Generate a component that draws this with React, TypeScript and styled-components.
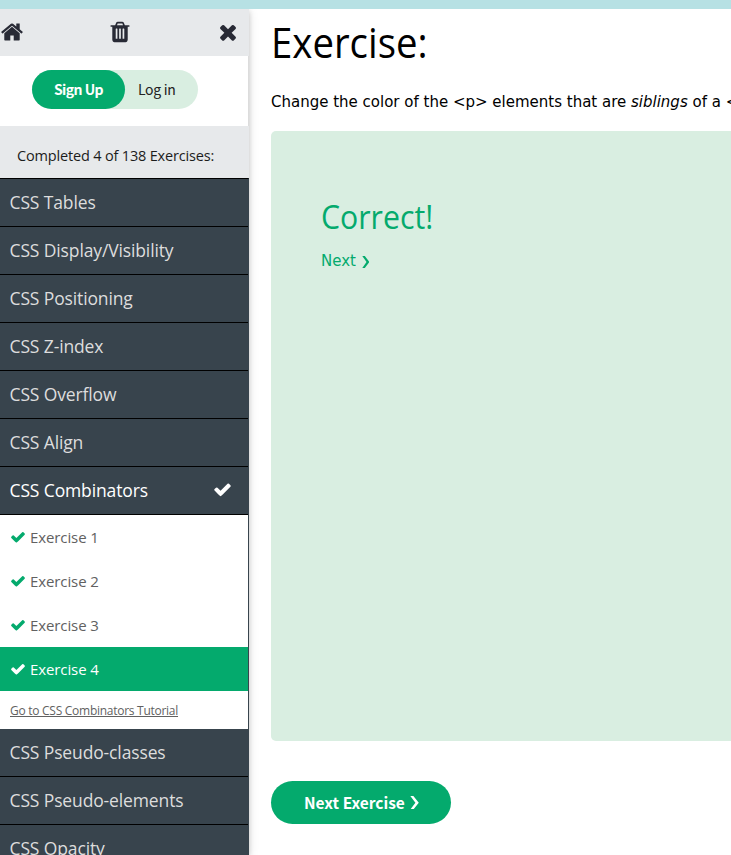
import React from "react";
import styled, { createGlobalStyle } from "styled-components";

const GlobalStyle = createGlobalStyle`
  * { box-sizing: border-box; }
  html, body { margin: 0; padding: 0; height: 100%; overflow: hidden; background: #fff; }
  a { color: inherit; text-decoration: none; }
`;

const Page = styled.div`
  height: 100vh;
  display: flex;
  flex-direction: column;
  overflow: hidden;
  color: #000;
`;
const TopStrip = styled.div`
  flex: 0 0 9px;
  background: #b7e1e4;
`;
const Body = styled.div`
  flex: 1;
  min-height: 0;
  display: flex;
  overflow: hidden;
`;
const Sidebar = styled.aside`
  flex: 0 0 249px;
  display: flex;
  flex-direction: column;
  background: #fff;
  box-shadow: 0 2px 5px rgba(0, 0, 0, 0.16), 0 2px 10px rgba(0, 0, 0, 0.12);
  font-family: "Open Sans", "Noto Sans", sans-serif;
`;
const ToolBar = styled.div`
  flex: 0 0 47px;
  display: flex;
  align-items: center;
  justify-content: space-between;
  padding: 0 9px 2px 0;
  background: #e7e9eb;
  color: #282a35;
`;
const Glyph = styled.svg<{ $size: number }>`
  display: block;
  flex: none;
  width: ${(p) => p.$size}px;
  height: ${(p) => p.$size}px;
  fill: currentColor;
`;
const Account = styled.div`
  flex: 0 0 70px;
  width: 248px;
  padding: 14px 0 0 32px;
  box-shadow: 1px 0 0 #dcdcdc;
`;
const Pill = styled.div`
  display: flex;
  width: 166px;
  height: 39px;
  border-radius: 20px;
  background: #d9eee1;
  font: 400 14px/38px "Noto Sans CJK SC", sans-serif;
  letter-spacing: -0.3px;
`;
const SignUp = styled.a`
  width: 93px;
  border-radius: 20px;
  background: #04aa6d;
  color: #fff;
  font-weight: 700;
  letter-spacing: -0.55px;
  text-align: center;
`;
const LogIn = styled.a`
  padding-left: 13px;
  color: #222;
`;
const Progress = styled.div`
  flex: 0 0 52px;
  padding: 8px 0 0 17px;
  background: #e7e9eb;
  color: #1c1c1c;
  font-size: 14.5px;
  line-height: 44px;
  letter-spacing: -0.17px;
  white-space: nowrap;
`;
const Topics = styled.nav`
  flex: none;
  border-top: 1px solid #000;
  border-right: 1px solid #38444d;
`;
const Topic = styled.a<{ $active?: boolean }>`
  display: flex;
  align-items: center;
  justify-content: space-between;
  height: 48px;
  padding: 0 16px 2px 9.5px;
  border-bottom: 1px solid #000;
  background: #38444d;
  color: ${(p) => (p.$active ? "#fff" : "#ddd")};
  font-size: 17.5px;
  letter-spacing: -0.13px;
  white-space: nowrap;
`;
const Exercise = styled.a<{ $active?: boolean }>`
  display: flex;
  align-items: center;
  gap: 4px;
  height: 44px;
  padding-left: 10px;
  background: ${(p) => (p.$active ? "#04aa6d" : "#fff")};
  color: ${(p) => (p.$active ? "#fff" : "#616161")};
  font-size: 15px;
  letter-spacing: -0.1px;
  svg { color: ${(p) => (p.$active ? "#fff" : "#04aa6d")}; }
`;
const TutorialLink = styled.a`
  display: block;
  height: 38px;
  padding-left: 10px;
  color: #616161;
  font-size: 12px;
  line-height: 39px;
  letter-spacing: -0.27px;
  text-decoration: underline;
`;
const Main = styled.main`
  flex: 1;
  min-width: 0;
  display: flex;
  flex-direction: column;
  align-items: flex-start;
  padding-left: 22px;
  overflow: hidden;
  font-family: "DejaVu Sans", sans-serif;
`;
const Title = styled.h1`
  margin: 1px 0 0;
  font: 400 42px/63px "Open Sans", "Noto Sans", sans-serif;
  transform: scaleX(0.913);
  transform-origin: left;
`;
const Question = styled.p`
  margin: 18px 0 0;
  font-size: 15px;
  line-height: 23px;
  white-space: nowrap;
`;
const Result = styled.section`
  flex: none;
  width: 600px;
  height: 610px;
  margin-top: 17px;
  padding: 61px 50px;
  border-radius: 5px;
  background: #d9eee1;
  color: #04aa6d;
`;
const ResultTitle = styled.h2`
  margin: 0;
  font: 400 32px/50px "Open Sans", "Noto Sans", sans-serif;
  transform: scaleX(0.945);
  transform-origin: left;
`;
const NextLink = styled.a`
  display: flex;
  align-items: center;
  gap: 6px;
  margin-top: 8px;
  font-size: 15px;
  line-height: 23px;
`;
const NextButton = styled.a`
  flex: none;
  display: flex;
  align-items: center;
  gap: 5px;
  width: 180px;
  height: 43px;
  margin-top: 40px;
  padding-left: 33px;
  border-radius: 25px;
  background: #04aa6d;
  color: #fff;
  font: 700 15.5px/43px "Noto Sans CJK SC", sans-serif;
  letter-spacing: 0;
  white-space: nowrap;
`;
const Arrow = styled.svg<{ $w: number; $h: number }>`
  flex: none;
  width: ${(p) => p.$w}px;
  height: ${(p) => p.$h}px;
  fill: currentColor;
`;

const paths = {
  home: "M1472 992v480q0 26-19 45t-45 19h-384v-384h-256v384h-384q-26 0-45-19t-19-45v-480q0-1 .5-3t.5-3l575-474 575 474q1 2 1 6zm223-69l-62 74q-8 9-21 11h-3q-13 0-21-7l-692-577-692 577q-12 8-24 7-13-2-21-11l-62-74q-8-10-7-23.5t11-21.5l719-599q32-26 76-26t76 26l244 204v-195q0-14 9-23t23-9h192q14 0 23 9t9 23v408l219 182q10 8 11 21.5t-7 23.5z",
  trash: "M704 1376v-704q0-14-9-23t-23-9h-64q-14 0-23 9t-9 23v704q0 14 9 23t23 9h64q14 0 23-9t9-23zm256 0v-704q0-14-9-23t-23-9h-64q-14 0-23 9t-9 23v704q0 14 9 23t23 9h64q14 0 23-9t9-23zm256 0v-704q0-14-9-23t-23-9h-64q-14 0-23 9t-9 23v704q0 14 9 23t23 9h64q14 0 23-9t9-23zm-544-992h448l-48-117q-7-9-17-11h-317q-10 2-17 11zm928 32v64q0 14-9 23t-23 9h-96v948q0 83-47 143.5t-113 60.5h-832q-66 0-113-58.5t-47-141.5v-952h-96q-14 0-23-9t-9-23v-64q0-14 9-23t23-9h309l70-167q15-37 54-63t79-26h320q40 0 79 26t54 63l70 167h309q14 0 23 9t9 23z",
  close: "M1490 1322q0 40-28 68l-136 136q-28 28-68 28t-68-28l-294-294-294 294q-28 28-68 28t-68-28l-136-136q-28-28-28-68t28-68l294-294-294-294q-28-28-28-68t28-68l136-136q28-28 68-28t68 28l294 294 294-294q28-28 68-28t68 28l136 136q28 28 28 68t-28 68l-294 294 294 294q28 28 28 68z",
  check: "M1671 566q0 40-28 68l-724 724-136 136q-28 28-68 28t-68-28l-136-136-362-362q-28-28-28-68t28-68l136-136q28-28 68-28t68 28l294 295 656-657q28-28 68-28t68 28l136 136q28 28 28 68z",
};

function Icon({ name, size }: { name: keyof typeof paths; size: number }) {
  return (
    <Glyph $size={size} viewBox="0 0 1792 1792" aria-hidden="true">
      <path fillRule="evenodd" d={paths[name]} />
    </Glyph>
  );
}

function Chevron({ w, h }: { w: number; h: number }) {
  return (
    <Arrow $w={w} $h={h} viewBox="0 0 8 13" preserveAspectRatio="none" aria-hidden="true">
      <path d="M0.3 0H3L7.8 6.5L3 13H0.3L4.8 6.5Z" />
    </Arrow>
  );
}

const before = ["CSS Tables", "CSS Display/Visibility", "CSS Positioning", "CSS Z-index", "CSS Overflow", "CSS Align"];
const after = ["CSS Pseudo-classes", "CSS Pseudo-elements", "CSS Opacity"];

export default function App() {
  return (
    <Page>
      <GlobalStyle />
      <TopStrip />
      <Body>
        <Sidebar>
          <ToolBar>
            <Icon name="home" size={24} />
            <Icon name="trash" size={24} />
            <Icon name="close" size={24} />
          </ToolBar>
          <Account>
            <Pill>
              <SignUp>Sign Up</SignUp>
              <LogIn>Log in</LogIn>
            </Pill>
          </Account>
          <Progress><span>Completed 4 of 138 Exercises:</span></Progress>
          <Topics>
            {before.map((t) => <Topic key={t}><span>{t}</span></Topic>)}
            <Topic $active><span>CSS Combinators</span><Icon name="check" size={19} /></Topic>
            {[1, 2, 3, 4].map((n) => (
              <Exercise key={n} $active={n === 4}>
                <Icon name="check" size={16} />
                <span>Exercise {n}</span>
              </Exercise>
            ))}
            <TutorialLink>Go to CSS Combinators Tutorial</TutorialLink>
            {after.map((t) => <Topic key={t}><span>{t}</span></Topic>)}
          </Topics>
        </Sidebar>
        <Main>
          <Title>Exercise:</Title>
          <Question>Change the color of the &lt;p&gt; elements that are <i>siblings</i> of a &lt;</Question>
          <Result>
            <ResultTitle>Correct!</ResultTitle>
            <NextLink><span>Next</span><Chevron w={7.5} h={12} /></NextLink>
          </Result>
          <NextButton><span>Next Exercise</span><Chevron w={9} h={13.5} /></NextButton>
        </Main>
      </Body>
    </Page>
  );
}
